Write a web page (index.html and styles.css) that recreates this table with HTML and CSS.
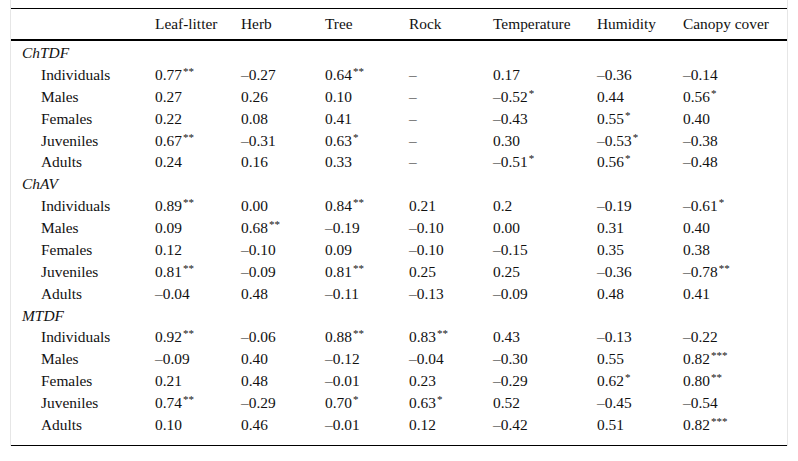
FILE: index.html
```html
<!DOCTYPE html>
<html>
<head>
<meta charset="utf-8">
<link rel="stylesheet" href="styles.css">
</head>
<body>
<div class="frame">
<table class="data">
<colgroup>
<col class="c-label"><col class="c-86"><col class="c-84"><col class="c-84"><col class="c-84"><col class="c-104"><col class="c-86"><col class="c-last">
</colgroup>
<thead>
<tr><th></th><th>Leaf-litter</th><th>Herb</th><th>Tree</th><th>Rock</th><th>Temperature</th><th>Humidity</th><th>Canopy cover</th></tr>
</thead>
<tbody>
<tr class="first"><td class="group" colspan="8">ChTDF</td></tr>
<tr><td class="sub">Individuals</td><td>0.77<sup>**</sup></td><td>–0.27</td><td>0.64<sup>**</sup></td><td>–</td><td>0.17</td><td>–0.36</td><td>–0.14</td></tr>
<tr><td class="sub">Males</td><td>0.27</td><td>0.26</td><td>0.10</td><td>–</td><td>–0.52<sup>*</sup></td><td>0.44</td><td>0.56<sup>*</sup></td></tr>
<tr><td class="sub">Females</td><td>0.22</td><td>0.08</td><td>0.41</td><td>–</td><td>–0.43</td><td>0.55<sup>*</sup></td><td>0.40</td></tr>
<tr><td class="sub">Juveniles</td><td>0.67<sup>**</sup></td><td>–0.31</td><td>0.63<sup>*</sup></td><td>–</td><td>0.30</td><td>–0.53<sup>*</sup></td><td>–0.38</td></tr>
<tr><td class="sub">Adults</td><td>0.24</td><td>0.16</td><td>0.33</td><td>–</td><td>–0.51<sup>*</sup></td><td>0.56<sup>*</sup></td><td>–0.48</td></tr>
<tr><td class="group" colspan="8">ChAV</td></tr>
<tr><td class="sub">Individuals</td><td>0.89<sup>**</sup></td><td>0.00</td><td>0.84<sup>**</sup></td><td>0.21</td><td>0.2</td><td>–0.19</td><td>–0.61<sup>*</sup></td></tr>
<tr><td class="sub">Males</td><td>0.09</td><td>0.68<sup>**</sup></td><td>–0.19</td><td>–0.10</td><td>0.00</td><td>0.31</td><td>0.40</td></tr>
<tr><td class="sub">Females</td><td>0.12</td><td>–0.10</td><td>0.09</td><td>–0.10</td><td>–0.15</td><td>0.35</td><td>0.38</td></tr>
<tr><td class="sub">Juveniles</td><td>0.81<sup>**</sup></td><td>–0.09</td><td>0.81<sup>**</sup></td><td>0.25</td><td>0.25</td><td>–0.36</td><td>–0.78<sup>**</sup></td></tr>
<tr><td class="sub">Adults</td><td>–0.04</td><td>0.48</td><td>–0.11</td><td>–0.13</td><td>–0.09</td><td>0.48</td><td>0.41</td></tr>
<tr><td class="group" colspan="8">MTDF</td></tr>
<tr><td class="sub">Individuals</td><td>0.92<sup>**</sup></td><td>–0.06</td><td>0.88<sup>**</sup></td><td>0.83<sup>**</sup></td><td>0.43</td><td>–0.13</td><td>–0.22</td></tr>
<tr><td class="sub">Males</td><td>–0.09</td><td>0.40</td><td>–0.12</td><td>–0.04</td><td>–0.30</td><td>0.55</td><td>0.82<sup>***</sup></td></tr>
<tr><td class="sub">Females</td><td>0.21</td><td>0.48</td><td>–0.01</td><td>0.23</td><td>–0.29</td><td>0.62<sup>*</sup></td><td>0.80<sup>**</sup></td></tr>
<tr><td class="sub">Juveniles</td><td>0.74<sup>**</sup></td><td>–0.29</td><td>0.70<sup>*</sup></td><td>0.63<sup>*</sup></td><td>0.52</td><td>–0.45</td><td>–0.54</td></tr>
<tr class="last"><td class="sub">Adults</td><td>0.10</td><td>0.46</td><td>–0.01</td><td>0.12</td><td>–0.42</td><td>0.51</td><td>0.82<sup>***</sup></td></tr>
</tbody>
</table>
</div>
</body>
</html>
```
FILE: styles.css
```css
html, body {
  margin: 0;
  padding: 0;
  background: #fff;
}
body {
  font-family: "Liberation Serif", "Times New Roman", serif;
  font-size: 15.4px;
  color: #111;
}
.frame {
  margin-left: 10px;
  width: 776px;
  padding-top: 8px;
  border-left: 1px solid #e6e6e6;
  border-right: 1px solid #e6e6e6;
}
.data {
  width: 776px;
  table-layout: fixed;
  border-collapse: separate;
  border-spacing: 0;
}
.c-label { width: 144px; }
.c-86 { width: 86px; }
.c-84 { width: 84px; }
.c-104 { width: 104px; }
.c-last { width: 104px; }
.data th {
  font-weight: normal;
  text-align: left;
  line-height: 22px;
  padding: 4px 0;
  border-top: 1px solid #000;
  border-bottom: 2px solid #000;
  white-space: nowrap;
}
.data td {
  text-align: left;
  line-height: 21.875px;
  padding: 0;
  white-space: nowrap;
}
.data tr.first td {
  padding-top: 1px;
}
.data tr.last td {
  padding-bottom: 9.25px;
  border-bottom: 1px solid #000;
}
.data td.group {
  font-style: italic;
  padding-left: 11px;
}
.data td.sub {
  padding-left: 30px;
}
sup {
  font-size: 11px;
  line-height: 0;
  vertical-align: 5px;
  margin-left: 1px;
}
```
